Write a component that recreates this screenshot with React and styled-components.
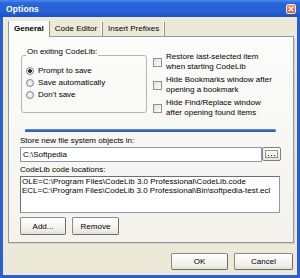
import styled, { createGlobalStyle } from "styled-components";

const GlobalStyle = createGlobalStyle`
  html, body {
    margin: 0;
    padding: 0;
  }
  body {
    background: #ECE9D8;
    font-family: "Liberation Sans", Arial, sans-serif;
    font-size: 8px;
    color: #000;
  }
  * {
    box-sizing: border-box;
  }
`;

const Window = styled.div`
    width: 300px;
    height: 278px;
    display: flex;
    flex-direction: column;
`

const TitleBar = styled.div`
    height: 17px;
    flex: none;
    display: flex;
    align-items: center;
    justify-content: space-between;
    padding: 0 4px 0 6px;
    background: linear-gradient(#4a8cf2 0%, #2a66d8 18%, #2460d6 70%, #1c52c0 100%);
    color: #fff;
    font-weight: bold;
    font-size: 8.5px;
    letter-spacing: 0.1px;
`

const CloseButton = styled.div`
    width: 10px;
    height: 10px;
    border: 1px solid #fbe3da;
    border-radius: 2px;
    background: linear-gradient(#f0906c, #d9532f);
    display: flex;
    align-items: center;
    justify-content: center;
`

const Body = styled.div`
    flex: 1;
    display: flex;
    flex-direction: column;
    background: #ECE9D8;
    border: 3px solid #2b5ecf;
    border-top: none;
    padding: 4px 3px 0 5px;
`

const TabRow = styled.div`
    display: flex;
    height: 16px;
    align-items: flex-end;
`

const Tab = styled.div`
    height: ${({ $active }) => ($active ? '16px' : '15px')};
    line-height: ${({ $active }) => ($active ? '15px' : '14px')};
    padding: 0 5px;
    font-weight: ${({ $active }) => ($active ? 'bold' : 'normal')};
    background: ${({ $active }) => ($active ? '#fcfcfb' : 'transparent')};
    border-left: ${({ $active }) => ($active ? '1px solid #919b9c' : 'none')};
    border-right: 1px solid #8f948f;
    border-bottom: ${({ $active }) => ($active ? 'none' : '1px solid #919b9c')};
    box-shadow: ${({ $active }) => ($active ? 'none' : 'inset -1px 0 0 #fff')};
    white-space: nowrap;
`

const TabFill = styled.div`
    flex: 1;
    height: 1px;
    background: #919b9c;
`

const Panel = styled.div`
    height: 206px;
    display: flex;
    flex-direction: column;
    border: 1px solid #919b9c;
    border-top: none;
    background: linear-gradient(#fcfcfb, #f3f2ec);
    padding: 10px 12px 0 12px;
    box-shadow: 1px 1px 0 #d4d1c2;
`

const TopRow = styled.div`
    display: flex;
    gap: 6px;
`

const GroupBox = styled.fieldset`
    width: 126px;
    height: 66px;
    margin: 0;
    padding: 1px 4px 0 4px;
    border: 1px solid #b7b6ab;
    border-radius: 3px;
    min-inline-size: 0;
`

const GroupLabel = styled.legend`
    padding: 0 1px 8px;
    line-height: 9px;
`

const RadioRow = styled.div`
    display: flex;
    align-items: center;
    gap: 4px;
    height: 12px;
    line-height: 12px;
`

const RadioDot = styled.span`
    width: 8px;
    height: 8px;
    flex: none;
    border-radius: 50%;
    border: 1px solid #7b8792;
    background: radial-gradient(circle at 50% 50%, ${({ $checked }) => ($checked ? '#2d2d2d 0, #2d2d2d 1.6px, #f6f6f4 2.2px' : '#fbfbfa 0')}, #dcdcd4 100%);
`

const CheckList = styled.div`
    display: flex;
    flex-direction: column;
    gap: 3px;
    padding-top: 5px;
`

const CheckItem = styled.div`
    display: flex;
    align-items: center;
    gap: 4px;
    line-height: 10px;
`

const CheckBox = styled.span`
    width: 9px;
    height: 9px;
    flex: none;
    border: 1px solid #8c9296;
    background: linear-gradient(135deg, #e2e1da, #fbfbf9);
`

const BlueRule = styled.div`
    width: 251px;
    height: 3px;
    margin: 11px 0 0 4px;
    border-radius: 1px 2px 2px 1px;
    background: linear-gradient(#7095d6, #2e5eb0 60%, #3563b3);
`

const FieldLabel = styled.div`
    line-height: 10px;
    margin-top: ${({ $top }) => $top}px;
    margin-left: -1px;
`

const PathRow = styled.div`
    display: flex;
    align-items: flex-start;
    margin-top: 1px;
    margin-left: -1px;
`

const PathInput = styled.div`
    width: 243px;
    height: 15px;
    line-height: 13px;
    border: 1px solid #8b9aab;
    background: #fff;
    padding: 0 2px;
`

const BrowseButton = styled.div`
    width: 19px;
    height: 14px;
    border: 1px solid #7d7d7d;
    border-radius: 2px;
    background: linear-gradient(#fefefe, #e9e7df);
    display: flex;
    align-items: center;
    justify-content: center;
`

const ListBox = styled.div`
    width: 260px;
    height: 37px;
    margin-top: 1px;
    margin-left: -1px;
    border: 1px solid #8b9aab;
    border-top-color: #6f6f6f;
    border-left-color: #6f6f6f;
    background: #fff;
    padding: 0 1px;
    line-height: 9px;
    white-space: nowrap;
`

const ActionRow = styled.div`
    display: flex;
    gap: 6px;
    margin-top: 4px;
    margin-left: -1px;
`

const Button = styled.div`
    width: ${({ $w }) => $w}px;
    height: ${({ $h }) => $h || 18}px;
    border: 1px solid #8a8a88;
    border-right-color: #6c6c6a;
    border-bottom-color: #6c6c6a;
    border-radius: 2px;
    background: linear-gradient(#ffffff, #f1f0ea 70%, #e3e1d8);
    display: flex;
    align-items: center;
    justify-content: center;
    white-space: nowrap;
`

const Footer = styled.div`
    display: flex;
    justify-content: flex-end;
    gap: 6px;
    margin-top: 10px;
    margin-right: 1px;
`

const options = ['Prompt to save', 'Save automatically', "Don't save"]

const checks = [
    ['Restore last-selected item', 'when starting CodeLib'],
    ['Hide Bookmarks window after', 'opening a bookmark'],
    ['Hide Find/Replace window', 'after opening found items'],
]

const App = () => {
    return (
        <>
            <GlobalStyle />
            <Window>
                <TitleBar>
                    <span>Options</span>
                    <CloseButton>
                        <svg width="6" height="6" viewBox="0 0 6 6">
                            <path d="M0.8 0.8 L5.2 5.2 M5.2 0.8 L0.8 5.2" stroke="#fff" strokeWidth="1.3" />
                        </svg>
                    </CloseButton>
                </TitleBar>
                <Body>
                    <TabRow>
                        <Tab $active>General</Tab>
                        <Tab>Code Editor</Tab>
                        <Tab>Insert Prefixes</Tab>
                        <TabFill />
                    </TabRow>
                    <Panel>
                        <TopRow>
                            <GroupBox>
                                <GroupLabel>On exiting CodeLib:</GroupLabel>
                                {options.map((label, i) => (
                                    <RadioRow key={label}>
                                        <RadioDot $checked={i === 0} />
                                        {label}
                                    </RadioRow>
                                ))}
                            </GroupBox>
                            <CheckList>
                                {checks.map(([a, b]) => (
                                    <CheckItem key={a}>
                                        <CheckBox />
                                        <div>{a}<br />{b}</div>
                                    </CheckItem>
                                ))}
                            </CheckList>
                        </TopRow>
                        <BlueRule />
                        <FieldLabel $top={4}>Store new file system objects in:</FieldLabel>
                        <PathRow>
                            <PathInput>C:\Softpedia</PathInput>
                            <BrowseButton>
                                <svg width="13" height="8" viewBox="0 0 13 8">
                                    <rect x="0.5" y="0.5" width="12" height="7" fill="none" stroke="#333" strokeWidth="1" strokeDasharray="1 1" />
                                    <path d="M3 5.5h1M6 5.5h1M9 5.5h1" stroke="#222" strokeWidth="1" />
                                </svg>
                            </BrowseButton>
                        </PathRow>
                        <FieldLabel $top={3}>CodeLib code locations:</FieldLabel>
                        <ListBox>
                            <div>OLE=C:\Program Files\CodeLib 3.0 Professional\CodeLib.code</div>
                            <div>ECL=C:\Program Files\CodeLib 3.0 Professional\Bin\softpedia-test.ecl</div>
                        </ListBox>
                        <ActionRow>
                            <Button $w={46}>Add...</Button>
                            <Button $w={47}>Remove</Button>
                        </ActionRow>
                    </Panel>
                    <Footer>
                        <Button $w={57} $h={17}>OK</Button>
                        <Button $w={59} $h={17}>Cancel</Button>
                    </Footer>
                </Body>
            </Window>
        </>
    )
}

export default App
